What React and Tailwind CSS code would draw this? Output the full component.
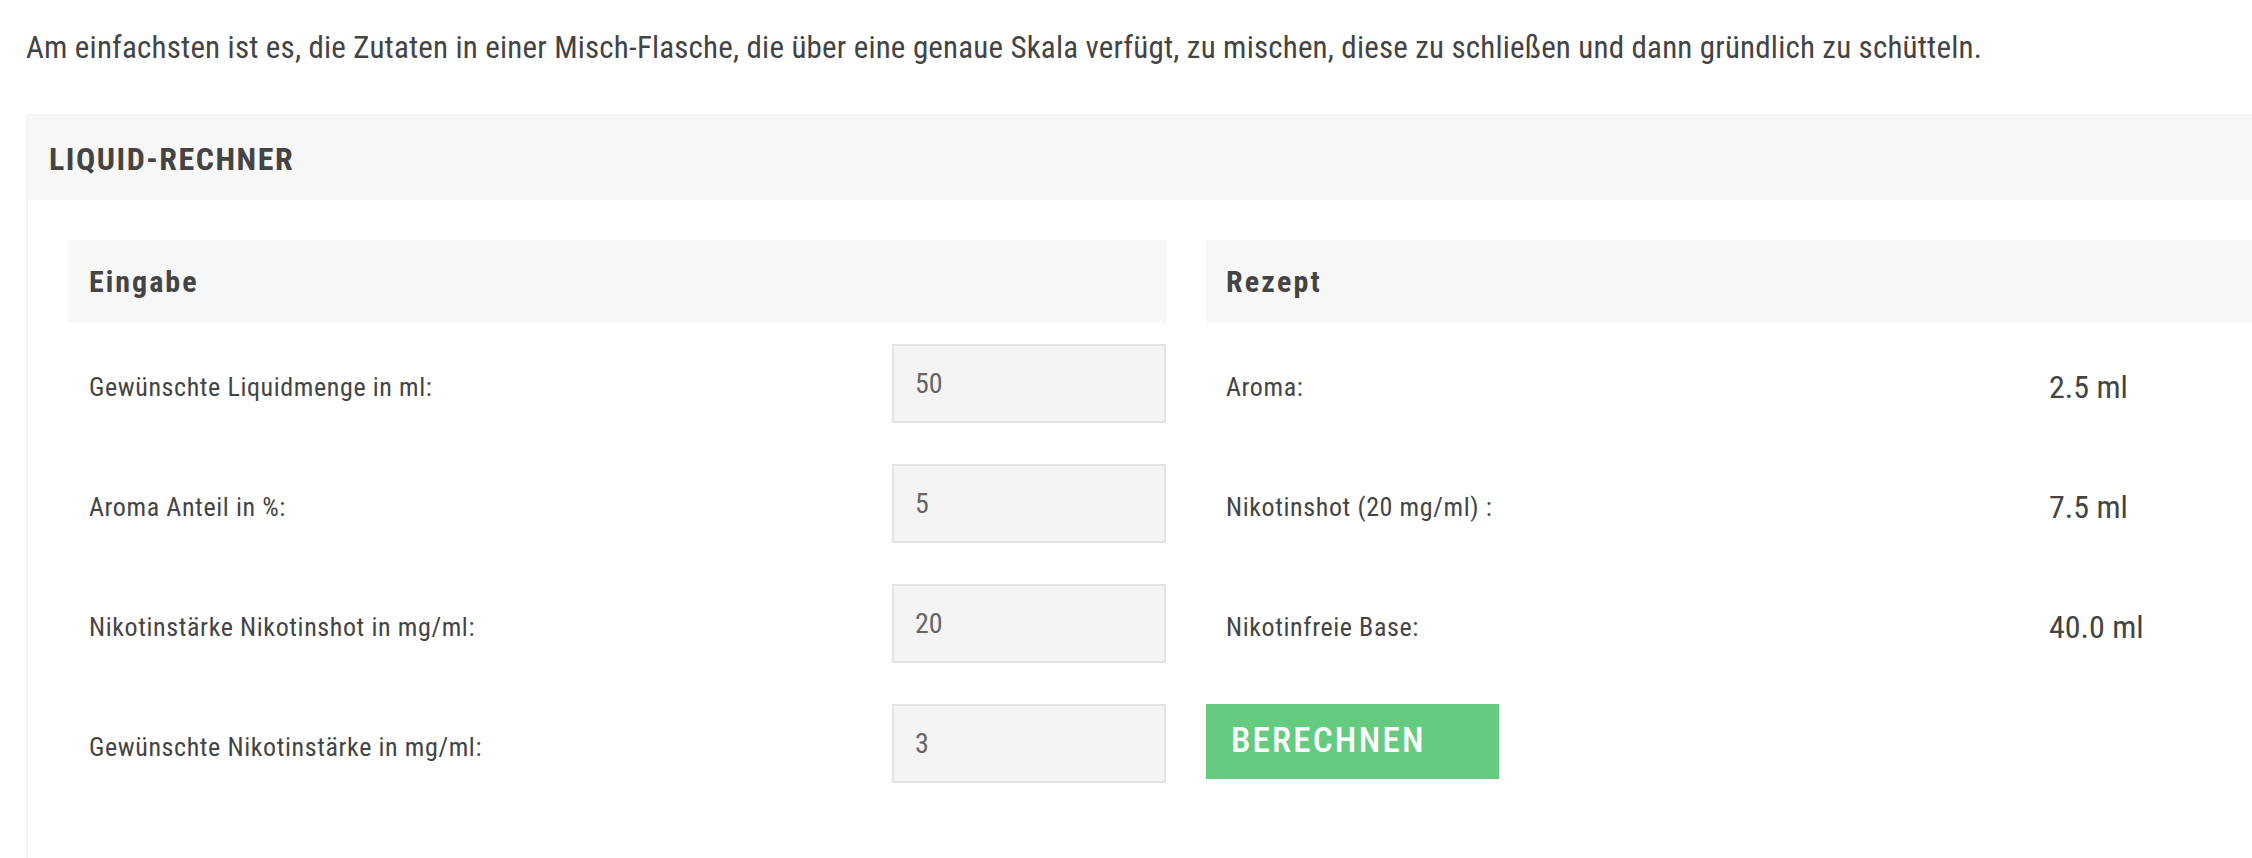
import { useState } from 'react'

const font = "font-['Roboto_Condensed','Liberation_Sans_Narrow','DejaVu_Sans_Condensed',Roboto,sans-serif]"

function InputRow({ label, value, onChange }) {
  return (
    <div className="flex items-center h-[79px]">
      <div className="flex-1 pl-[21px] pt-[8px] text-[26px] tracking-[0.6px] text-[#444]">{label}</div>
      <input
        type="text"
        value={value}
        onChange={(e) => onChange(e.target.value)}
        className="w-[274px] h-[79px] bg-[#f4f4f4] border-2 border-[#e3e3e3] px-[21px] text-[28px] text-[#666] outline-none"
      />
    </div>
  )
}

function ResultRow({ label, value }) {
  return (
    <div className="flex items-center h-[79px]">
      <div className="w-[824px] pl-[20px] pt-[8px] text-[26px] tracking-[0.6px] text-[#444]">{label}</div>
      <div className="flex-1 pl-[19px] pt-[6px] text-[32px] text-[#444]">{value}</div>
    </div>
  )
}

export default function App() {
  const [amount, setAmount] = useState('50')
  const [aroma, setAroma] = useState('5')
  const [shot, setShot] = useState('20')
  const [target, setTarget] = useState('3')
  const [result, setResult] = useState({ aroma: '2.5', shot: '7.5', base: '40.0' })

  const calc = () => {
    const a = parseFloat(amount) || 0
    const ar = (a * (parseFloat(aroma) || 0)) / 100
    const s = shot > 0 ? (a * (parseFloat(target) || 0)) / parseFloat(shot) : 0
    setResult({ aroma: ar.toFixed(1), shot: s.toFixed(1), base: (a - ar - s).toFixed(1) })
  }

  return (
    <div className={`w-[2252px] h-[858px] overflow-hidden bg-white ${font}`}>
      <p className="mt-[25px] pl-[26px] text-[31px] leading-[45px] tracking-[0.18px] text-[#444] whitespace-nowrap">
        Am einfachsten ist es, die Zutaten in einer Misch-Flasche, die über eine genaue Skala verfügt, zu mischen, diese zu schließen und dann gründlich zu schütteln.
      </p>

      {/* Rechner */}
      <div className="ml-[26px] mt-[44px] w-[2320px] border-2 border-[#f4f4f5]">
        <div className="h-[84px] bg-[#f7f7f8] flex items-center pl-[21px]">
          <h3 className="text-[32px] leading-none font-bold uppercase tracking-[1.5px] text-[#444] pt-[2px]">Liquid-Rechner</h3>
        </div>

        <div className="grid grid-cols-2 gap-[40px] pt-[40px] px-[40px] pb-[120px]">
          {/* Eingabe */}
          <div>
            <div className="h-[83px] bg-[#f7f7f8] flex items-center px-[21px]">
              <h4 className="text-[30px] font-bold tracking-[2px] text-[#444]">Eingabe</h4>
            </div>
            <div className="mt-[21px] flex flex-col gap-[41px]">
              <InputRow label="Gewünschte Liquidmenge in ml:" value={amount} onChange={setAmount} />
              <InputRow label="Aroma Anteil in %:" value={aroma} onChange={setAroma} />
              <InputRow label="Nikotinstärke Nikotinshot in mg/ml:" value={shot} onChange={setShot} />
              <InputRow label="Gewünschte Nikotinstärke in mg/ml:" value={target} onChange={setTarget} />
            </div>
          </div>

          {/* Rezept */}
          <div>
            <div className="h-[83px] bg-[#f7f7f8] flex items-center px-[20px]">
              <h4 className="text-[30px] font-bold tracking-[2.2px] text-[#444]">Rezept</h4>
            </div>
            <div className="mt-[21px] flex flex-col gap-[41px]">
              <ResultRow label="Aroma:" value={`${result.aroma} ml`} />
              <ResultRow label="Nikotinshot (20 mg/ml) :" value={`${result.shot} ml`} />
              <ResultRow label="Nikotinfreie Base:" value={`${result.base} ml`} />
              <div className="h-[79px] flex items-start">
                <button
                  onClick={calc}
                  className="w-[293px] h-[75px] bg-[#64cb80] text-white text-[35px] font-medium uppercase text-left pl-[25px] tracking-[2.2px]"
                >
                  Berechnen
                </button>
              </div>
            </div>
          </div>
        </div>
      </div>
    </div>
  )
}
